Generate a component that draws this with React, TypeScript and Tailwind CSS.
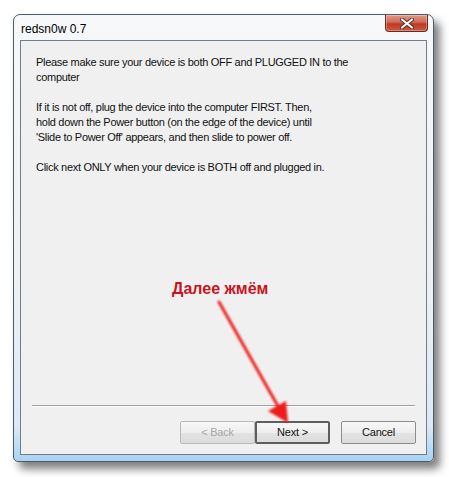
import React from "react";

function CloseButton() {
  return (
    <div className="absolute right-[5px] top-0 w-[43px] h-[17px] rounded-b-[4px] border border-t-0 border-[#6b2b24] bg-[linear-gradient(to_bottom,#e29a8a_0%,#d06a55_45%,#bd3a24_55%,#cc5a40_100%)] flex items-center justify-center shadow-[inset_0_0_0_1px_rgba(255,255,255,0.3)]">
      <svg width="14" height="11" viewBox="0 0 14 11">
        <path d="M2 1.5 L12 9.5 M12 1.5 L2 9.5" stroke="#5a2a22" strokeWidth="4" strokeLinecap="round" />
        <path d="M2 1.5 L12 9.5 M12 1.5 L2 9.5" stroke="#ffffff" strokeWidth="2.2" strokeLinecap="round" />
      </svg>
    </div>
  );
}

function Btn({ label, disabled, def }: { label: string; disabled?: boolean; def?: boolean }) {
  return (
    <div
      className={
        "w-[75px] h-[23px] flex items-center justify-center text-[11px] tracking-[-0.2px] rounded-[2px] bg-[linear-gradient(to_bottom,#f7f7f7_0%,#eeeeee_50%,#e3e3e3_51%,#dcdcdc_100%)] " +
        (def
          ? "border-2 border-[#5e5e5e] text-[#111]"
          : disabled
          ? "border border-[#b9b9b9] text-[#a6a6a6]"
          : "border border-[#8c8c8c] text-[#111]")
      }
    >
      {label}
    </div>
  );
}

export default function App() {
  return (
    <div className="relative w-[449px] h-[477px] bg-white overflow-hidden" style={{ fontFamily: '"Liberation Sans", Arial, sans-serif' }}>
      <div className="pl-[13px] pt-[14px]">
        <div className="relative w-[421px] h-[448px] rounded-t-[7px] rounded-b-[5px] border border-[#4e5a66] bg-[linear-gradient(to_bottom,#f6f8fa_0%,#edf1f4_60%,#dce9f4_92%,#a9d3f3_100%)] shadow-[6px_7px_9px_rgba(0,0,0,0.5)] flex flex-col">
          <CloseButton />
          <div className="h-[25px] pl-[7px] flex items-center text-[12px] text-black">
            <span className="mt-[2px]">redsn0w 0.7</span>
          </div>
          <div className="mx-[6px] mb-[6px] flex-1 border border-[#6f7e8c] bg-[#f0f0f0] flex flex-col text-[11px] tracking-[-0.3px] text-[#111]">
            <div className="pl-[15px] pt-[14px] leading-[15px] flex flex-col gap-[15px]">
              <p>
                Please make sure your device is both OFF and PLUGGED IN to the
                <br />
                computer
              </p>
              <p>
                If it is not off, plug the device into the computer FIRST. Then,
                <br />
                hold down the Power button (on the edge of the device) until
                <br />
                'Slide to Power Off' appears, and then slide to power off.
              </p>
              <p>Click next ONLY when your device is BOTH off and plugged in.</p>
            </div>
            <div className="flex-1" />
            <div className="mx-[11px] h-[2px] border-t border-[#a0a0a0] border-b border-b-white" />
            <div className="flex justify-end pr-[10px] pt-[14px] pb-[10px]">
              <Btn label="< Back" disabled />
              <Btn label="Next >" def />
              <div className="w-[11px]" />
              <Btn label="Cancel" />
            </div>
          </div>
        </div>
      </div>
      <div className="absolute left-[172px] top-[277px] text-[16px] font-bold text-[#c8141e]">Далее жмём</div>
      <svg className="absolute left-0 top-0 pointer-events-none" width="449" height="477" viewBox="0 0 449 477">
        <defs>
          <filter id="glow" x="-50%" y="-50%" width="200%" height="200%">
            <feGaussianBlur stdDeviation="0.8" />
          </filter>
        </defs>
        <g filter="url(#glow)">
          <line x1="219" y1="302" x2="279" y2="408" stroke="#ee2222" strokeWidth="3" strokeLinecap="round" />
          <polygon points="268,411 286,401 288,423" fill="#ee1a1a" />
        </g>
      </svg>
    </div>
  );
}
